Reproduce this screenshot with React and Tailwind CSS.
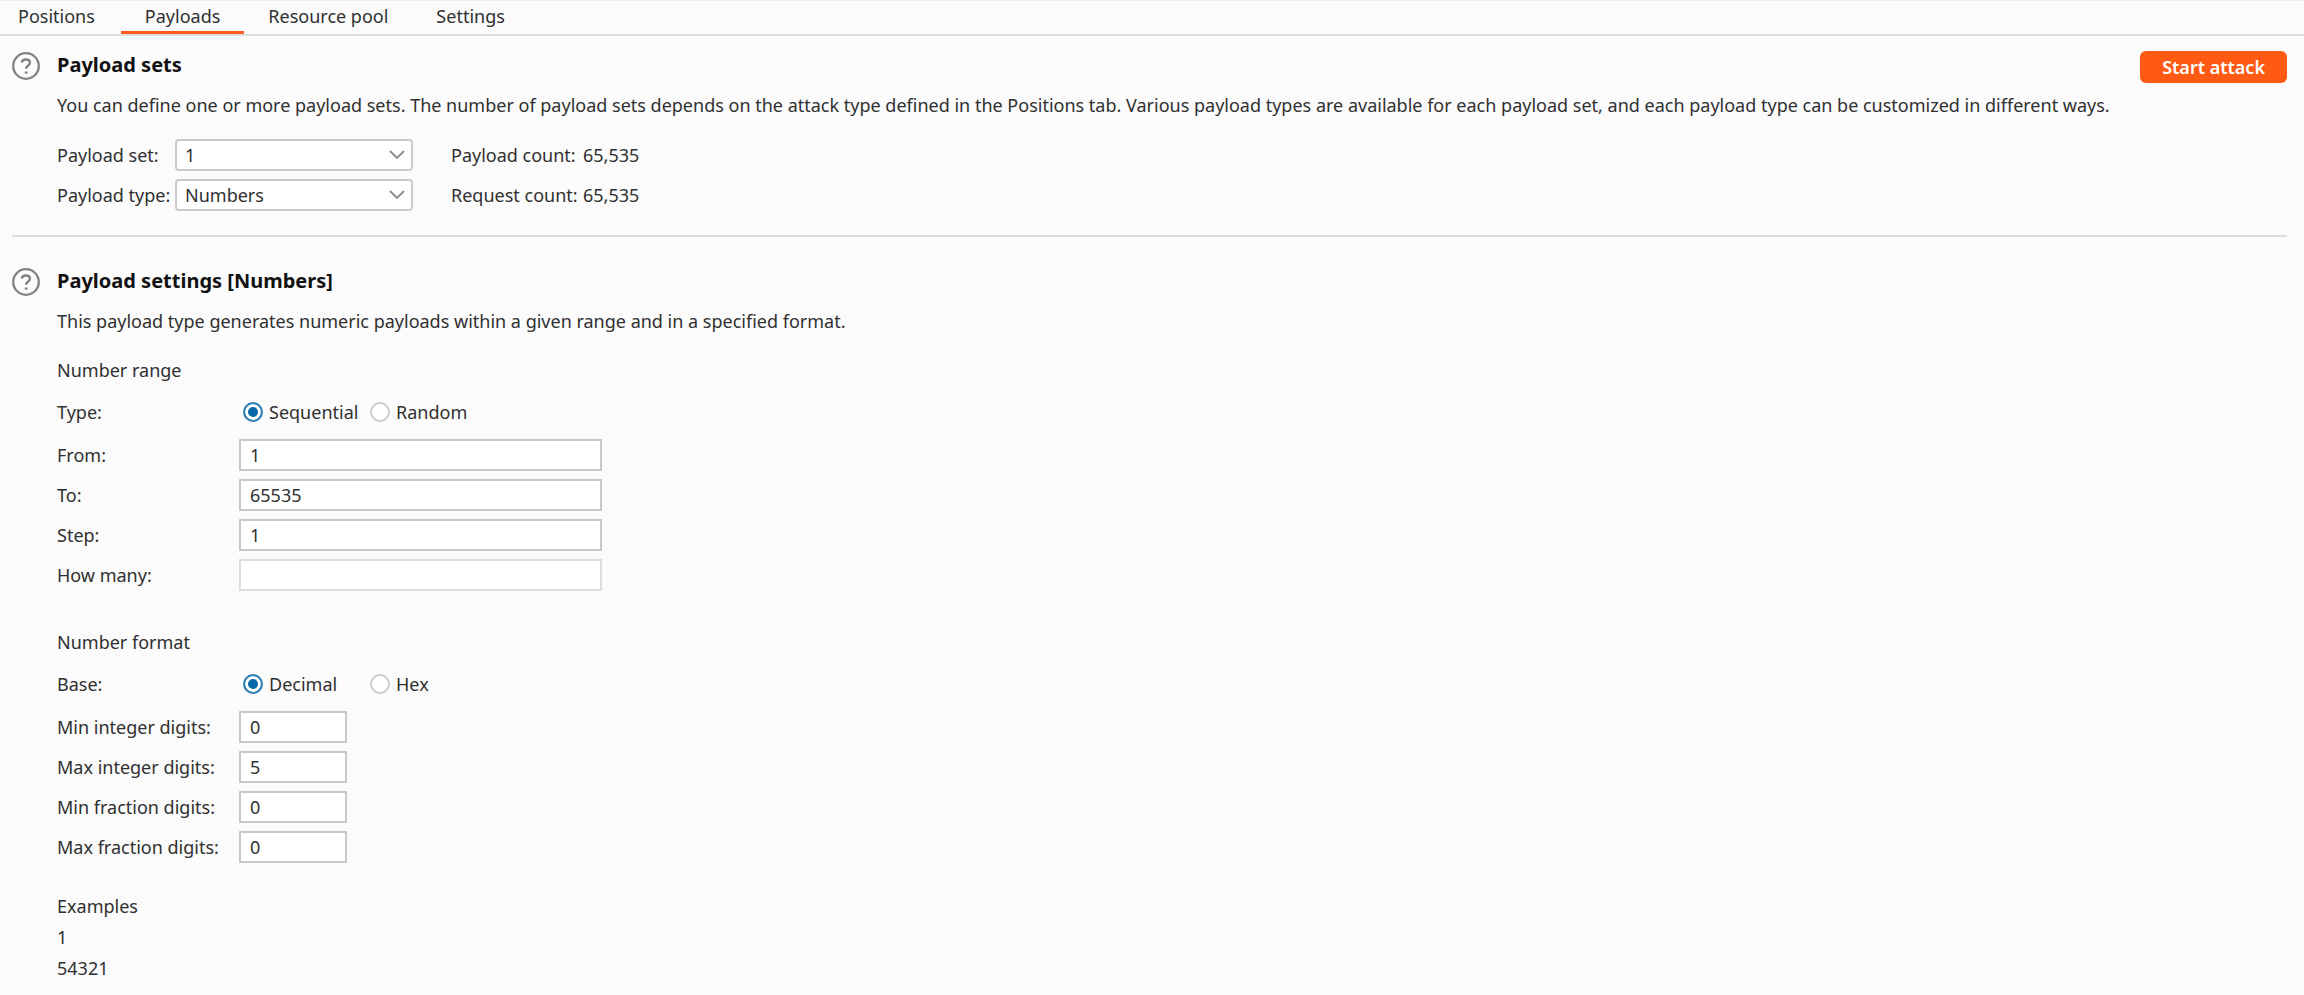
import { useState } from 'react'

const tabs = ['Positions', 'Payloads', 'Resource pool', 'Settings']

const HelpIcon = () => (
  <button type="button" aria-label="Help" className="mt-px h-7 w-7 shrink-0">
    <svg viewBox="0 0 28 28" className="h-7 w-7" fill="none" stroke="#828282">
      <circle cx="14" cy="14" r="12.8" strokeWidth="2.3" />
      <path d="M9.9 10.6C10 8.7 11.6 7.5 13.9 7.5C16.3 7.5 18 8.8 18 10.8C18 13.6 14.1 13.5 14.1 16.8" strokeWidth="2.3" />
      <circle cx="14.1" cy="20.6" r="1.4" fill="#828282" stroke="none" />
    </svg>
  </button>
)

const SelectRow = ({ id, label, options, countLabel, count }) => (
  <div className="flex h-8 items-center">
    <label htmlFor={id} className="w-[118px] shrink-0 whitespace-nowrap">{label}</label>
    <div className="relative w-[238px] shrink-0">
      <select
        id={id}
        className="block h-8 w-full appearance-none rounded border-2 border-[#d0c9cb] bg-white pl-2 pr-9 leading-7 outline-none"
      >
        {options.map((option) => (
          <option key={option}>{option}</option>
        ))}
      </select>
      <svg viewBox="0 0 16 10" className="pointer-events-none absolute right-2 top-[11px] h-[10px] w-4" fill="none" stroke="#8a8a8a" strokeWidth="1.8">
        <path d="M1 1L8 8L15 1" />
      </svg>
    </div>
    <span className="ml-[38px] w-[132px] whitespace-nowrap">{countLabel}</span>
    <span>{count}</span>
  </div>
)

const RadioRow = ({ name, label, options }) => (
  <div className="flex h-7 items-center" role="radiogroup" aria-label={label}>
    <span className="w-[186px]">{label}</span>
    {options.map((option, i) => (
      <label key={option} className="flex w-[127px] items-center gap-[6px]">
        <input
          type="radio"
          name={name}
          defaultChecked={i === 0}
          className="h-5 w-5 shrink-0 appearance-none rounded-full border-2 border-[#cccccc] bg-white checked:border-[#2f7fb8] checked:bg-[#0867a6] checked:shadow-[inset_0_0_0_3px_#ffffff]"
        />
        {option}
      </label>
    ))}
  </div>
)

const Field = ({ id, label, value, small, disabled }) => (
  <div className="flex h-8 items-center">
    <label htmlFor={id} className="w-[182px] shrink-0 whitespace-nowrap">{label}</label>
    <input
      id={id}
      type="text"
      defaultValue={value}
      disabled={disabled}
      className={`h-8 border-2 border-[#cdc6c8] bg-white px-[9px] leading-7 outline-none disabled:border-[#dcdcdc] ${small ? 'w-[108px]' : 'w-[363px]'}`}
    />
  </div>
)

const App = () => {
  const [activeTab, setActiveTab] = useState('Payloads')

  return (
    <div className="min-h-screen bg-[#fbfbfb] font-['Noto_Sans',sans-serif] text-[18px] leading-7 text-[#303030]">
      {/* Tabs */}
      <nav className="flex h-[36px] border-b-2 border-t border-t-[#eeeeee] border-b-[#d8dfdd] pr-4">
        {tabs.map((tab) => (
          <button
            key={tab}
            type="button"
            onClick={() => setActiveTab(tab)}
            className={`h-[33px] border-b-[3px] px-6 leading-7 first:pl-[18px] first:pr-[26px] ${activeTab === tab ? 'border-[#ff5a1f]' : 'border-transparent'}`}
          >
            {tab}
          </button>
        ))}
      </nav>

      <main className="pl-3 pr-[17px]">
        {/* Payload sets */}
        <section className="flex gap-[17px] border-b-2 border-[#dcdedd] pb-6 pt-[15px]">
          <HelpIcon />
          <div className="flex-1">
            <div className="flex h-7 items-start justify-between">
              <h2 className="text-[20px] font-bold text-[#111111]">Payload sets</h2>
              <button type="button" className="h-8 rounded-md bg-[#ff5a14] px-[22px] font-semibold text-white">
                Start attack
              </button>
            </div>
            <p className="mt-3">
              You can define one or more payload sets. The number of payload sets depends on the attack type defined in the Positions tab. Various payload types are available for each payload set, and each payload type can be customized in different ways.
            </p>
            <div className="mt-5 flex flex-col gap-2">
              <SelectRow id="payload-set" label="Payload set:" options={['1']} countLabel="Payload count:" count="65,535" />
              <SelectRow id="payload-type" label="Payload type:" options={['Numbers']} countLabel="Request count:" count="65,535" />
            </div>
          </div>
        </section>

        {/* Payload settings */}
        <section className="flex gap-[17px] pt-[30px]">
          <HelpIcon />
          <div className="flex-1">
            <h2 className="text-[20px] font-bold text-[#111111]">Payload settings [Numbers]</h2>
            <p className="mt-3">This payload type generates numeric payloads within a given range and in a specified format.</p>

            <h3 className="mt-[21px]">Number range</h3>
            <div className="mt-[14px]">
              <RadioRow name="type" label="Type:" options={['Sequential', 'Random']} />
            </div>
            <div className="mt-[13px] flex flex-col gap-2">
              <Field id="from" label="From:" value="1" />
              <Field id="to" label="To:" value="65535" />
              <Field id="step" label="Step:" value="1" />
              <Field id="how-many" label="How many:" value="" disabled />
            </div>

            <h3 className="mt-[37px]">Number format</h3>
            <div className="mt-[14px]">
              <RadioRow name="base" label="Base:" options={['Decimal', 'Hex']} />
            </div>
            <div className="mt-[13px] flex flex-col gap-2">
              <Field id="min-int" label="Min integer digits:" value="0" small />
              <Field id="max-int" label="Max integer digits:" value="5" small />
              <Field id="min-frac" label="Min fraction digits:" value="0" small />
              <Field id="max-frac" label="Max fraction digits:" value="0" small />
            </div>

            <div className="mt-7 leading-[31px]">
              <h3>Examples</h3>
              <p>1</p>
              <p>54321</p>
            </div>
          </div>
        </section>
      </main>
    </div>
  )
}

export default App
